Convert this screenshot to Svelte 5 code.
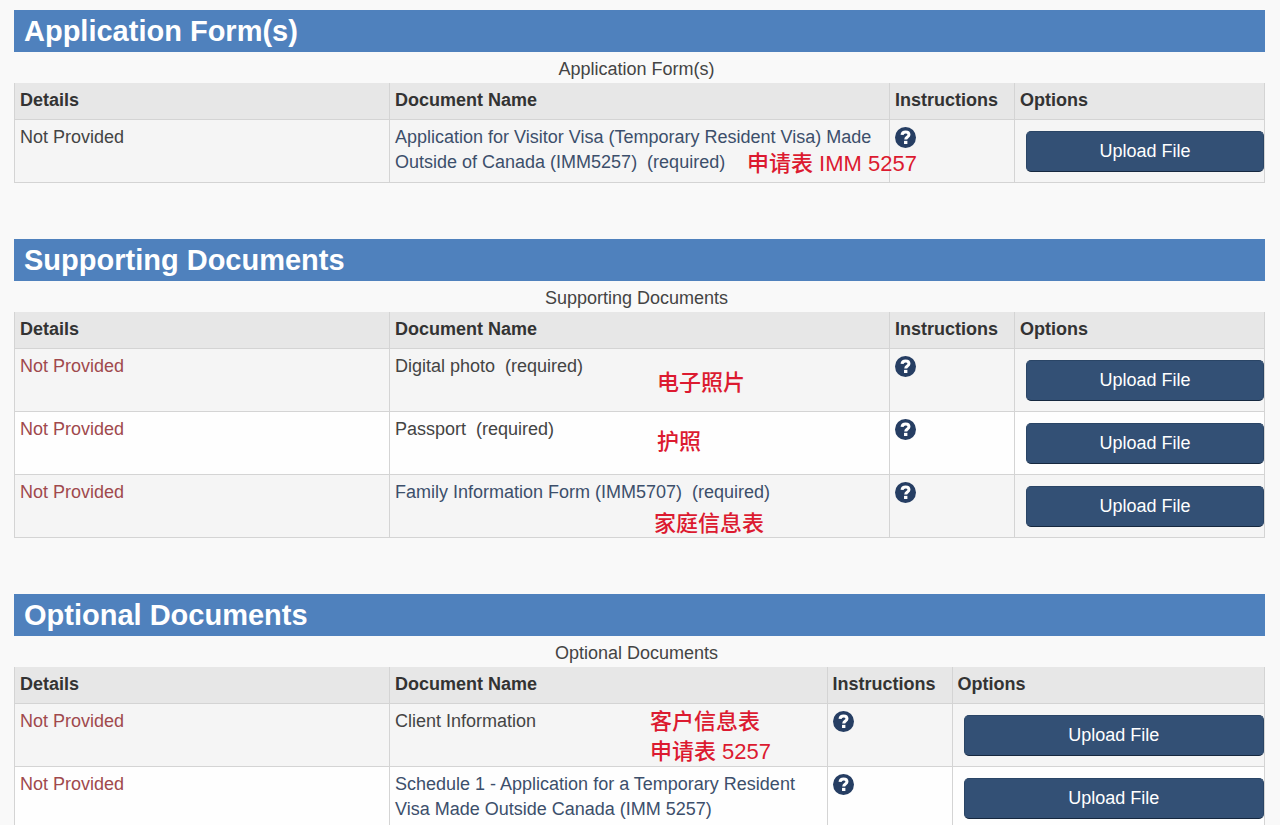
<script>
  const sections = [
    {
      title: 'Application Form(s)',
      layout: 'standard',
      rows: [
        {
          name: 'Application for Visitor Visa (Temporary Resident Visa) Made Outside of Canada (IMM5257)',
          link: true,
          required: true,
          neutral: true,
          note: { lines: ['申请表 IMM 5257'], x: 357, y: 29 }
        }
      ]
    },
    {
      title: 'Supporting Documents',
      layout: 'standard',
      rows: [
        { name: 'Digital photo', required: true, note: { lines: ['电子照片'], x: 267, y: 19 } },
        { name: 'Passport', required: true, note: { lines: ['护照'], x: 267, y: 15 } },
        {
          name: 'Family Information Form (IMM5707)',
          link: true,
          required: true,
          note: { lines: ['家庭信息表'], x: 264, y: 34 }
        }
      ]
    },
    {
      title: 'Optional Documents',
      layout: 'wide-options',
      rows: [
        { name: 'Client Information', note: { lines: ['客户信息表', '申请表 5257'], x: 260, y: 3 } },
        {
          name: 'Schedule 1 - Application for a Temporary Resident Visa Made Outside Canada (IMM 5257)',
          link: true
        }
      ]
    }
  ];
</script>

<main>
  {#each sections as section}
    <section>
      <h2>{section.title}</h2>
      <table class={section.layout}>
        <caption>{section.title}</caption>
        <colgroup>
          <col class="col-details" />
          <col class="col-name" />
          <col class="col-instructions" />
          <col class="col-options" />
        </colgroup>
        <thead>
          <tr>
            <th scope="col">Details</th>
            <th scope="col">Document Name</th>
            <th scope="col">Instructions</th>
            <th scope="col">Options</th>
          </tr>
        </thead>
        <tbody>
          {#each section.rows as row}
            <tr>
              <td class="status" class:neutral={row.neutral}>Not Provided</td>
              <td class="name">
                {#if row.link}
                  <a href="#form">{row.name}{row.required ? '\u00a0 (required)' : ''}</a>
                {:else}
                  {row.name}{row.required ? '\u00a0 (required)' : ''}
                {/if}
                {#if row.note}
                  <div class="note" style="left: {row.note.x}px; top: {row.note.y}px">
                    {#each row.note.lines as line}
                      <div>{line}</div>
                    {/each}
                  </div>
                {/if}
              </td>
              <td>
                <button class="help" type="button" aria-label="Instructions for {row.name}">
                  <svg viewBox="0 0 20 20" aria-hidden="true">
                    <circle cx="10" cy="10" r="10" />
                    <path d="M6.7 7.6C6.9 5.5 8.2 4.7 10.1 4.7c1.9 0 3.2 1 3.2 2.6 0 2.3-3.1 2.2-3.1 4.7" />
                    <rect x="8.6" y="13.2" width="3.2" height="3" />
                  </svg>
                </button>
              </td>
              <td class="options">
                <button class="upload" type="button">Upload File</button>
              </td>
            </tr>
          {/each}
        </tbody>
      </table>
    </section>
  {/each}
</main>

<style>
  :global(body) {
    background: #f9f9f9;
  }

  main {
    padding: 10px 15px 0 14px;
    color: #444;
    font: 18px/25px "Liberation Sans", Arial, sans-serif;
  }

  section {
    margin-bottom: 56px;
  }

  section:last-child {
    margin-bottom: 0;
  }

  h2 {
    margin: 0;
    padding: 0 10px;
    background: #4f81bd;
    color: #fff;
    font-size: 29px;
    line-height: 42px;
  }

  table {
    width: 100%;
    table-layout: fixed;
    border-collapse: collapse;
  }

  caption {
    padding: 5px 6px 1px 0;
  }

  .col-details {
    width: 30%;
  }

  .col-name {
    width: 40%;
  }

  .col-instructions {
    width: 10%;
  }

  .col-options {
    width: 20%;
  }

  .wide-options .col-name {
    width: 35%;
  }

  .wide-options .col-options {
    width: 25%;
  }

  th,
  td {
    padding: 5px;
    border: 1px solid #d4d4d4;
    text-align: left;
    vertical-align: top;
  }

  th {
    padding-bottom: 6px;
    border-top: 0;
    background: #e7e7e7;
    color: #333;
  }

  tbody tr {
    background: #fefefe;
  }

  tbody tr:nth-child(odd) {
    background: #f5f5f5;
  }

  .status {
    color: #a0494d;
  }

  .status.neutral {
    color: #444;
  }

  .name {
    position: relative;
  }

  a {
    color: #3c4f6b;
    text-decoration: none;
  }

  .note {
    position: absolute;
    z-index: 1;
    color: #dc1a30;
    font: 500 22px/30px "Liberation Sans", "Noto Sans CJK SC", sans-serif;
    white-space: nowrap;
  }

  .help {
    display: block;
    margin: 2px 0 0;
    padding: 0;
    border: 0;
    background: none;
    cursor: pointer;
  }

  .help svg {
    display: block;
    width: 21px;
    height: 21px;
  }

  .help circle {
    fill: #263e63;
  }

  .help path {
    fill: none;
    stroke: #fff;
    stroke-width: 2.9;
  }

  .help rect {
    fill: #fff;
  }

  .options {
    padding: 11px 0 10px 11px;
  }

  .upload {
    display: block;
    width: 100%;
    height: 41px;
    padding: 0;
    border: 1px solid #2a4566;
    border-bottom-color: #16283f;
    border-radius: 5px;
    background: #335075;
    color: #fff;
    font: inherit;
    cursor: pointer;
  }
</style>
